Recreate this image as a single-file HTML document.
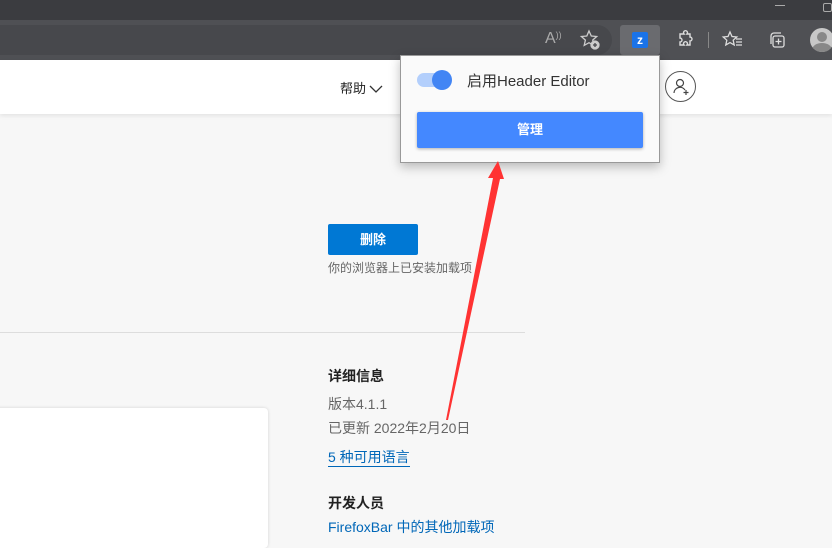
<!DOCTYPE html>
<html><head><meta charset="utf-8">
<style>
*{margin:0;padding:0;box-sizing:border-box}
body{width:832px;height:533px;overflow:hidden;background:#f7f7f7;font-family:"Liberation Sans","Noto Sans CJK SC",sans-serif;position:relative}
.abs{position:absolute}
</style></head><body>
<div class="abs" style="left:0;top:0;width:832px;height:20px;background:#3b3c40"></div>
<div class="abs" style="left:775px;top:5px;width:10px;height:1px;background:#aaa"></div>
<div class="abs" style="left:823px;top:3px;width:9px;height:9px;border:1px solid #aaa;border-radius:2px"></div>
<div class="abs" style="left:0;top:20px;width:832px;height:40px;background:#4f5054"></div>
<div class="abs" style="left:0;top:25px;width:612px;height:30px;background:#47484c;border-radius:0 15px 15px 0"></div>
<div class="abs" style="left:545px;top:30px;color:#aaa;font-size:16px">A<span style="font-size:9px;vertical-align:top">))</span></div>
<svg class="abs" style="left:578px;top:28px" width="24" height="24" viewBox="0 0 24 24" fill="none" stroke="#ccc" stroke-width="1.3"><path d="M11 3l2.3 5 5.4.5-4 3.6 1.2 5.3L11 14.7 6.2 17.4l1.2-5.3-4-3.6 5.4-.5z"/><circle cx="17" cy="17" r="4" fill="#ccc"/><path d="M17 15v4M15 17h4" stroke="#47484c"/></svg>
<div class="abs" style="left:620px;top:25px;width:40px;height:30px;background:#6a6b6f;border-radius:3px"></div>
<div class="abs" style="left:632px;top:32px;width:16px;height:16px;background:#1a73e8;border-radius:2px;color:#fff;font-size:12px;font-weight:bold;text-align:center;line-height:16px">z</div>
<svg class="abs" style="left:674px;top:29px" width="22" height="22" viewBox="0 0 22 22" fill="none" stroke="#ddd" stroke-width="1.4"><path d="M7 5h3a2 2 0 1 1 3 0h3v3a2 2 0 1 1 0 4v4h-3a2 2 0 1 0-3 0H6v-3a2 2 0 1 0 0-4V5z"/></svg>
<div class="abs" style="left:708px;top:32px;width:1px;height:16px;background:#888"></div>
<svg class="abs" style="left:721px;top:29px" width="24" height="22" viewBox="0 0 24 22" fill="none" stroke="#ddd" stroke-width="1.3"><path d="M9 3l2 4.5 4.8.5-3.6 3.2 1 4.8L9 13.6 4.8 16l1-4.8L2.2 8l4.8-.5z"/><path d="M15 10h6M15 13h6M15 16h6"/></svg>
<svg class="abs" style="left:766px;top:29px" width="22" height="22" viewBox="0 0 22 22" fill="none" stroke="#ddd" stroke-width="1.3"><rect x="7" y="7" width="11" height="11" rx="2"/><path d="M5 15V7a3 3 0 0 1 3-3h7M12.5 9.5v6M9.5 12.5h6"/></svg>
<div class="abs" style="left:810px;top:28px;width:24px;height:24px;border-radius:50%;background:#c8c8c8;overflow:hidden"><div class="abs" style="left:7px;top:4px;width:10px;height:10px;border-radius:50%;background:#888"></div><div class="abs" style="left:2px;top:15px;width:20px;height:14px;border-radius:50%;background:#888"></div></div>
<div class="abs" style="left:0;top:60px;width:832px;height:54px;background:#fff;box-shadow:0 2px 4px rgba(0,0,0,.08)"></div>
<div class="abs" style="left:340px;top:78px;font-size:13px;color:#222">帮助</div>
<svg class="abs" style="left:369px;top:85px" width="14" height="9"><path d="M1 1l6 6 6-6" fill="none" stroke="#333" stroke-width="1.3"/></svg>
<div class="abs" style="left:665px;top:71px;width:31px;height:31px;border:1px solid #555;border-radius:50%"></div>
<svg class="abs" style="left:670px;top:76px" width="22" height="22" viewBox="0 0 22 22" fill="none" stroke="#444" stroke-width="1.2"><circle cx="10" cy="7" r="3.5"/><path d="M4 17a6 6 0 0 1 11-3M16 14v5M13.5 16.5h5"/></svg>
<div class="abs" style="left:328px;top:224px;width:90px;height:31px;background:#0078d4;border-radius:2px;color:#fff;font-size:13px;font-weight:bold;text-align:center;line-height:31px">删除</div>
<div class="abs" style="left:328px;top:259px;font-size:12px;color:#666">你的浏览器上已安装加载项</div>
<div class="abs" style="left:0;top:332px;width:525px;height:1px;background:#ddd"></div>
<div class="abs" style="left:328px;top:366px;font-size:14px;font-weight:bold;color:#222">详细信息</div>
<div class="abs" style="left:328px;top:394px;font-size:14px;color:#666">版本4.1.1</div>
<div class="abs" style="left:328px;top:418px;font-size:14px;color:#666">已更新 2022年2月20日</div>
<div class="abs" style="left:328px;top:449px;font-size:14px;color:#0067b8;border-bottom:1px solid #0067b8;line-height:17px">5 种可用语言</div>
<div class="abs" style="left:328px;top:493px;font-size:14px;font-weight:bold;color:#222">开发人员</div>
<div class="abs" style="left:328px;top:517px;font-size:14px;color:#0067b8">FirefoxBar 中的其他加载项</div>
<div class="abs" style="left:-5px;top:408px;width:273px;height:140px;background:#fff;border-radius:4px;box-shadow:0 0 3px rgba(0,0,0,.15)"></div>
<div class="abs" style="left:400px;top:55px;width:260px;height:108px;background:#fafafa;border:1px solid #999;box-shadow:0 4px 10px rgba(0,0,0,.25)"></div>
<div class="abs" style="left:417px;top:73px;width:34px;height:14px;border-radius:7px;background:#b3cffc"></div>
<div class="abs" style="left:432px;top:70px;width:20px;height:20px;border-radius:50%;background:#4285f4"></div>
<div class="abs" style="left:467px;top:70px;font-size:15px;color:#333">启用Header Editor</div>
<div class="abs" style="left:417px;top:112px;width:226px;height:36px;background:#4488ff;border-radius:2px;box-shadow:0 1px 3px rgba(0,0,0,.3);color:#fff;font-size:13px;font-weight:bold;text-align:center;line-height:36px">管理</div>
<svg class="abs" style="left:0;top:0" width="832" height="533"><polygon points="498,161 504,179 500,179 448,420 446,420 493,178 488,178" fill="#f33"/></svg>
</body></html>
